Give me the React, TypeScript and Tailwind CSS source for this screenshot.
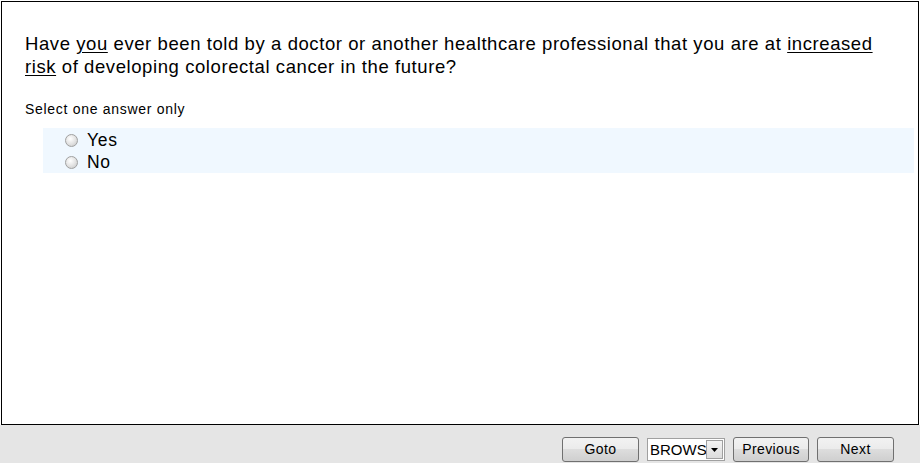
import React from "react";

function Radio() {
  return (
    <span className="inline-block w-[13px] h-[13px] rounded-full border border-[#a0a0a0] bg-[radial-gradient(circle_at_40%_35%,#ffffff_0%,#e4e4e4_50%,#c4c4c4_100%)] shrink-0" />
  );
}

function Btn({ children, w }: { children: React.ReactNode; w: string }) {
  return (
    <div
      className={`${w} h-[25px] flex items-center justify-center rounded-[3px] border border-[#707070] bg-[linear-gradient(#f2f2f2_0%,#ebebeb_50%,#dddddd_50%,#cfcfcf_100%)] text-[14px] tracking-[0.4px] text-black`}
    >
      {children}
    </div>
  );
}

export default function App() {
  return (
    <div
      className="w-[920px] h-[463px] bg-white flex flex-col"
      style={{ fontFamily: '"Liberation Sans", Arial, sans-serif' }}
    >
      <div className="mt-[1px] ml-[1px] w-[918px] h-[424px] border border-black bg-white pl-[23px] pt-[30px]">
        <div className="text-[18.5px] leading-[23px] tracking-[0.58px] text-black whitespace-nowrap">
          Have <span className="underline underline-offset-2">you</span> ever been told by a doctor or another healthcare professional that you are at{" "}
          <span className="underline underline-offset-2">increased</span>
          <br />
          <span className="underline underline-offset-2">risk</span> of developing colorectal cancer in the future?
        </div>
        <div className="mt-[23px] text-[14px] leading-[16px] tracking-[0.7px] text-black">Select one answer only</div>
        <div className="mt-[11px] ml-[18px] w-[871px] h-[45px] bg-[#f0f8ff] pl-[22px] pt-[1px]">
          <div className="flex items-center h-[22px] gap-[9px]">
            <Radio />
            <span className="text-[17.5px] tracking-[0.7px] text-black">Yes</span>
          </div>
          <div className="flex items-center h-[22px] gap-[9px]">
            <Radio />
            <span className="text-[17.5px] tracking-[0.7px] text-black">No</span>
          </div>
        </div>
      </div>
      <div className="flex-1 bg-[#e5e5e5] flex items-start justify-end pr-[26px] pt-[12px] gap-[8px]">
        <Btn w="w-[77px]">Goto</Btn>
        <div className="w-[78px] h-[23px] mt-[1px] border border-[#a0a0a0] bg-white flex items-center">
          <span className="flex-1 overflow-hidden whitespace-nowrap text-[15px] pl-[2px] text-black leading-[20px]">BROWS</span>
          <span className="w-[17px] h-[19px] mr-[1px] border border-[#a0a0a0] bg-[linear-gradient(#f4f4f4,#dcdcdc)] flex items-center justify-center">
            <svg width="7" height="4" viewBox="0 0 7 4"><path d="M0 0h7L3.5 4z" fill="#000" /></svg>
          </span>
        </div>
        <Btn w="w-[76px]">Previous</Btn>
        <Btn w="w-[77px]">Next</Btn>
      </div>
    </div>
  );
}
